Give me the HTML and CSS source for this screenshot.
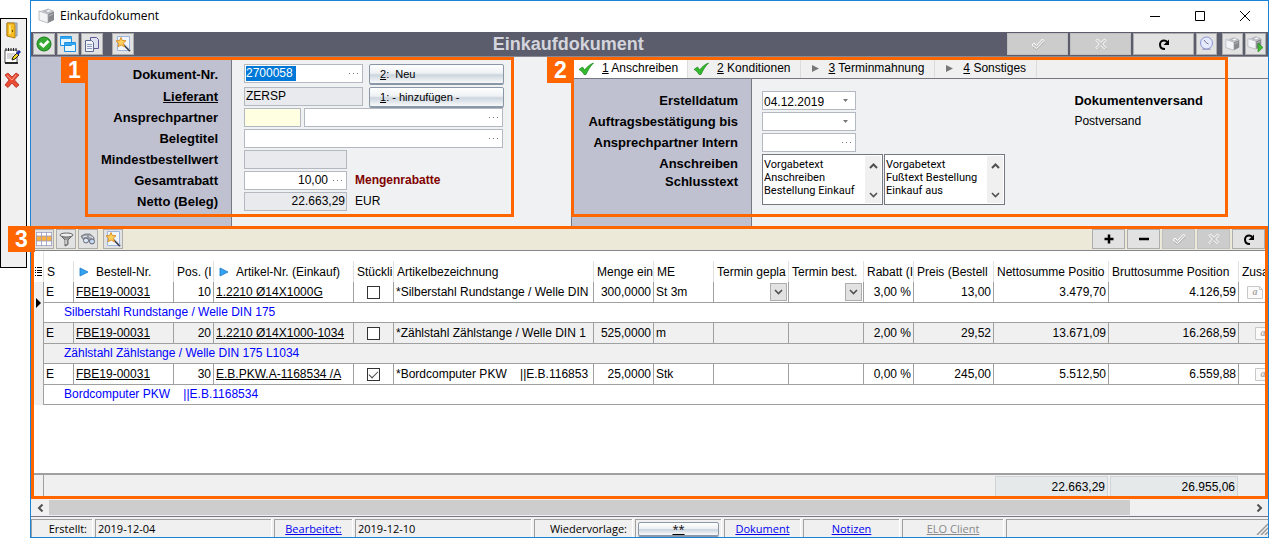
FILE: index.html
```html
<!DOCTYPE html>
<html lang="de">
<head>
<meta charset="utf-8">
<title>Einkaufdokument</title>
<link rel="stylesheet" href="styles.css">
</head>
<body>
<svg class="defs" aria-hidden="true">
  <symbol id="i-wand" viewBox="0 0 18 18">
    <path d="M3.500 1.500h12v14h-12z" fill="#f1f5fc" stroke="#9db4de"/>
    <path d="M10 10l6 6" stroke="#3b4152" stroke-width="1.800"/><path d="M10.500 9.500l5.500 5.500" stroke="#c6cddb" stroke-width=".7"/>
    <path d="M7 2.500l1.300 3 3.700.2-2.700 2.500 1.200 3.600-3.300-1.800-3.300 1.800.8-3.600L2 5.900l3.500-.4z" fill="#ffcf5e" stroke="#d98a1e" stroke-width=".9"/>
  </symbol>
  <symbol id="i-check" viewBox="0 0 15 14">
    <path d="M0 7.500l3.500-2.500 2.200 3C8 5 10.500 2.500 14.500 1c-3.500 3.500-5.500 7.500-7.500 11.500H5C4 10.500 2.500 8.800 0 7.500z" fill="#34b92e" stroke="#1c851a" stroke-width=".7"/>
  </symbol>
  <symbol id="i-ok" viewBox="0 0 14 12">
    <path d="M1 7l2-2 2.500 2.500L11.500 1 13 2.500 5.500 10.500z" fill="#c4c4c4" stroke="#fff"/><path d="M2 9l3.500 2.700L13.500 4" fill="none" stroke="#a4a4a4" stroke-width=".7"/>
  </symbol>
  <symbol id="i-no" viewBox="0 0 12 12">
    <path d="M1 2.500L2.500 1 6 4.300 9.500 1 11 2.500 7.700 6 11 9.500 9.500 11 6 7.700 2.500 11 1 9.500 4.300 6z" fill="#c4c4c4" stroke="#fff"/><path d="M11.500 10L10 11.500M2.500 11.700L6 8.500" stroke="#a4a4a4" stroke-width=".7"/>
  </symbol>
  <symbol id="i-reload" viewBox="0 0 12 12">
    <path d="M7 11C3.500 11 2 9 2 6.500S4 2.500 6 2.500c1.500 0 2.500.6 3 1.500" fill="none" stroke="#000" stroke-width="2"/><path d="M11 1.500V7H5.500z"/>
  </symbol>
  <symbol id="i-printer" viewBox="0 0 18 18">
    <path d="M1 4l9-2 6 2v9l-7 3-8-3z" fill="#d5d7db"/><path d="M10 7l6-2.500V13l-6 3z" fill="#85878c"/><path d="M1 4l9 3v9l-9-3z" fill="#f3f4f6" stroke="#a9abb0" stroke-width=".7"/><path d="M4 4l6-2.500L16 4l-6 2.500z" fill="#b6b9bf"/><path d="M8 4l3-1.300L13 4l-3 1z" fill="#f9fafc"/><path d="M11 9l4-2" stroke="#bbb"/>
  </symbol>
  <symbol id="i-tri" viewBox="0 0 10 10"><path d="M1 1l8 4-8 4z" fill="#35a3f1" stroke="#1878c8" stroke-width=".8"/></symbol>
  <symbol id="i-grey" viewBox="0 0 8 8"><path d="M0 0l8 4-8 4z" fill="#777"/></symbol>
  <symbol id="i-down" viewBox="0 0 9 6"><path d="M1 1l3.500 3.500L8 1" fill="none" stroke="#505050" stroke-width="1.600"/></symbol>
  <symbol id="i-up" viewBox="0 0 9 6"><path d="M1 5l3.500-3.500L8 5" fill="none" stroke="#505050" stroke-width="2"/></symbol>
  <symbol id="i-dots" viewBox="0 0 9 3"><path d="M0 1h1v1H0zM4 1h1v1H4zM8 1h1v1H8z" fill="#777"/></symbol>
  <symbol id="i-note" viewBox="0 0 16 13">
    <path d="M.5.500h12l3 3v9H.5z" fill="#fafafa" stroke="#c9c9c9"/><path d="M12.500.500v3h3" fill="none" stroke="#c9c9c9"/>
  </symbol>
</svg>

<nav class="strip" aria-label="Werkzeuge">
  <button aria-label="Verlassen"><svg width="16" height="17" viewBox="0 0 16 17"><path d="M3 1h10v13H3z" fill="#b9c6d6" stroke="#8a93a0"/><path d="M3 1h7l1 2v13l-8-2z" fill="#f6bd22" stroke="#b47f0c"/><path d="M5 3h2v9H5z" fill="#ffe27a"/><path d="M8.500 8v2" stroke="#704c00"/></svg></button>
  <button aria-label="Notiz"><svg width="17" height="17" viewBox="0 0 17 17"><path d="M1 3h12v13H1z" fill="#fff" stroke="#555"/><path d="M1 16h13" stroke="#000" stroke-width="1.500"/><path d="M2 1v3M4.500 1v3M7 1v3M9.500 1v3M12 1v3" stroke="#222"/><path d="M3 7h8M3 9h6M3 11h5" stroke="#aaa"/><path d="M8 13l1-3 4-4 2 2-4 4z" fill="#f4d419" stroke="#221"/><path d="M12 6l3-3 2 2-3 3z" fill="#1e2ea8"/></svg></button>
  <button aria-label="Löschen"><svg width="16" height="16" viewBox="0 0 16 16"><path d="M1 3l3-2 4 4 4-4 3 2-4.500 5 4.500 5-3 2.500L8 11l-4 4.500L1 13l4-5z" fill="#ea4b33" stroke="#b32a1c" stroke-width=".8"/><path d="M3 3.500L8 8l4-5" fill="none" stroke="#f9a08c"/></svg></button>
</nav>

<main class="window">
  <header class="titlebar">
    <svg width="18" height="18"><use href="#i-printer"/></svg>
    <span class="caption">Einkaufdokument</span>
    <button aria-label="Minimieren"><svg width="12" height="12" viewBox="0 0 12 12"><path d="M1 6.500h10" stroke="#000"/></svg></button>
    <button aria-label="Maximieren"><svg width="12" height="12" viewBox="0 0 12 12"><path d="M1.500 1.500h9v9h-9z" fill="none" stroke="#000"/></svg></button>
    <button aria-label="Schließen"><svg width="12" height="12" viewBox="0 0 12 12"><path d="M1 1l10 10M11 1L1 11" stroke="#000"/></svg></button>
  </header>

  <div class="toolbar">
    <div class="tools">
      <button class="tool" aria-label="Speichern"><svg width="16" height="16" viewBox="0 0 16 16"><circle cx="8" cy="8" r="7" fill="#35ab31" stroke="#18791a"/><path d="M3 8l2-2 2.300 2.300L11.500 4l2 2-6.200 6z" fill="#fff"/></svg></button>
      <button class="tool" aria-label="Fenster"><svg width="18" height="18" viewBox="0 0 18 18"><path d="M1.500 1.500h11v9h-11zM5.500 7.500h11v9h-11z" fill="#e6f6ff" stroke="#1c8fe0"/><path d="M1.500 3h11M5.500 9h11" stroke="#35a8f4" stroke-width="2"/></svg></button>
      <button class="tool" aria-label="Kopieren"><svg width="16" height="16" viewBox="0 0 16 16"><path d="M6.500 1.500h6l2 2v9h-8z" fill="#dfe2f0" stroke="#5d5794"/><path d="M1.500 4.500h6l2 2v9h-8z" fill="#f2f4fa" stroke="#5a6b92"/><path d="M3 8.500h5M3 10.500h5M3 12.500h5" stroke="#8a9bbd"/></svg></button>
      <button class="tool apart" aria-label="Assistent"><svg width="18" height="18"><use href="#i-wand"/></svg></button>
    </div>
    <h1>Einkaufdokument</h1>
    <div class="tools end">
      <button class="tool wide" disabled aria-label="Übernehmen"><svg width="14" height="12"><use href="#i-ok"/></svg></button>
      <button class="tool wide" disabled aria-label="Verwerfen"><svg width="12" height="12"><use href="#i-no"/></svg></button>
      <button class="tool wide" aria-label="Aktualisieren"><svg width="12" height="12"><use href="#i-reload"/></svg></button>
      <button class="tool" aria-label="Uhr"><svg width="16" height="16" viewBox="0 0 16 16"><path d="M4 12l-1 2h9l-1-2z" fill="#aab"/><circle cx="7.500" cy="7" r="6" fill="#e6eaff" stroke="#8b93d6"/><path d="M7.500 7l2 1M7.500 7L5 4" stroke="#778"/></svg></button>
      <button class="tool gap" aria-label="Drucken"><svg width="16" height="16"><use href="#i-printer"/></svg></button>
      <button class="tool" aria-label="Sofort drucken"><svg width="18" height="18" viewBox="0 0 18 18"><use href="#i-printer" width="16" height="16"/><path d="M11 8l5 4.500-5 4.500z" fill="#42ba36" stroke="#208018" stroke-width=".6"/></svg></button>
    </div>
  </div>

  <div class="panels">
    <section class="panel first">
      <div class="labels">
        <label for="nr">Dokument-Nr.</label>
        <label for="lief"><u>Lieferant</u></label>
        <label for="asp">Ansprechpartner</label>
        <label for="titel">Belegtitel</label>
        <label for="mind">Mindestbestellwert</label>
        <label for="rabatt">Gesamtrabatt</label>
        <label for="netto">Netto (Beleg)</label>
      </div>
      <div class="values">
        <div class="line"><span class="field mid"><input id="nr" class="marked" value="2700058"><svg class="dots"><use href="#i-dots"/></svg></span><button class="glossy"><u>2</u>:&nbsp; Neu</button></div>
        <div class="line"><span class="field mid ro"><input id="lief" value="ZERSP" readonly></span><button class="glossy"><u>1</u>: - hinzufügen -</button></div>
        <div class="line tight"><span class="field code"><input id="asp"></span><span class="field name"><input aria-label="Name Ansprechpartner"><svg class="dots"><use href="#i-dots"/></svg></span></div>
        <div class="line"><span class="field full"><input id="titel"><svg class="dots"><use href="#i-dots"/></svg></span></div>
        <div class="line"><span class="field num ro"><input id="mind" readonly></span></div>
        <div class="line"><span class="field num"><input id="rabatt" value="10,00"><svg class="dots"><use href="#i-dots"/></svg></span><strong>Mengenrabatte</strong></div>
        <div class="line"><span class="field num ro"><input id="netto" value="22.663,29" readonly></span><span>EUR</span></div>
      </div>
      <div class="frame one"><b>1</b></div>
    </section>

    <section class="panel second">
      <div class="tabs" role="tablist">
        <button role="tab" aria-selected="true"><svg width="15" height="14"><use href="#i-check"/></svg><span><u>1</u> Anschreiben</span></button>
        <button role="tab"><svg width="15" height="14"><use href="#i-check"/></svg><span><u>2</u> Konditionen</span></button>
        <button role="tab" class="grey"><svg width="7" height="7"><use href="#i-grey"/></svg><span><u>3</u> Terminmahnung</span></button>
        <button role="tab" class="grey"><svg width="7" height="7"><use href="#i-grey"/></svg><span><u>4</u> Sonstiges</span></button>
      </div>
      <div class="sheet">
        <div class="labels">
          <label for="datum">Erstelldatum</label>
          <label for="ab">Auftragsbestätigung bis</label>
          <label for="intern">Ansprechpartner Intern</label>
          <label for="ansch">Anschreiben</label>
          <label for="schluss">Schlusstext</label>
        </div>
        <div class="values">
          <div class="line"><span class="field date"><select id="datum"><option>04.12.2019</option></select><svg class="arrow" viewBox="0 0 5 3"><path d="M0 0h5L2.500 3z" fill="#777"/></svg></span></div>
          <div class="line"><span class="field date"><select id="ab"><option></option></select><svg class="arrow" viewBox="0 0 5 3"><path d="M0 0h5L2.500 3z" fill="#777"/></svg></span></div>
          <div class="line"><span class="field date"><input id="intern"><svg class="dots"><use href="#i-dots"/></svg></span></div>
          <div class="memos">
            <div class="memo"><textarea id="ansch">Vorgabetext
Anschreiben
Bestellung Einkauf</textarea><div class="scroll"><svg width="9" height="6"><use href="#i-up"/></svg><svg width="9" height="6"><use href="#i-down"/></svg></div></div>
            <div class="memo"><textarea id="schluss">Vorgabetext
Fußtext Bestellung
Einkauf aus</textarea><div class="scroll"><svg width="9" height="6"><use href="#i-up"/></svg><svg width="9" height="6"><use href="#i-down"/></svg></div></div>
          </div>
        </div>
        <div class="dispatch"><b>Dokumentenversand</b><span>Postversand</span></div>
      </div>
      <div class="frame two"><b>2</b></div>
    </section>
  </div>

  <section class="positions">
    <b class="tag">3</b>
    <div class="gridbar">
      <button class="tool" aria-label="Spalten"><svg width="16" height="16" viewBox="0 0 16 16"><path d="M0 1h16v14H0z" fill="#fff"/><path d="M0 5h16v5H0z" fill="#fbb040"/><path d="M0 1.500h16M0 5h16M0 10h16M0 14.500h16M5.500 1v14M10.500 1v14M.5 1v14M15.500 1v14" stroke="#99b" stroke-width=".8"/></svg></button>
      <button class="tool" aria-label="Filter"><svg width="15" height="15" viewBox="0 0 15 15"><path d="M1 3l5 5v6l3-1.500V8l5-5z" fill="#9a9a9a" stroke="#666"/><ellipse cx="7.500" cy="3" rx="6.500" ry="2" fill="#eee" stroke="#666"/><path d="M7 8v4" stroke="#fff"/></svg></button>
      <button class="tool" aria-label="Suchen"><svg width="16" height="14" viewBox="0 0 16 14"><path d="M1 4l4-2h5l4 3.500v4l-3 2-4-4-4 0z" fill="#959ca6" stroke="#656d76" stroke-width=".7"/><circle cx="6" cy="8.500" r="2.500" fill="#dbe9f7" stroke="#667"/><circle cx="12" cy="9.500" r="2.500" fill="#c4d9f2" stroke="#667"/><path d="M3 5l4-1M9 4l4 2" stroke="#eee"/></svg></button>
      <button class="tool gap" aria-label="Assistent"><svg width="18" height="18"><use href="#i-wand"/></svg></button>
      <span class="fill"></span>
      <button class="tool wide" aria-label="Hinzufügen"><svg width="10" height="10" viewBox="0 0 10 10"><path d="M5 .5v9M.5 5h9" stroke="#000" stroke-width="2.500"/></svg></button>
      <button class="tool wide" aria-label="Entfernen"><svg width="10" height="10" viewBox="0 0 10 10"><path d="M0 5h10" stroke="#000" stroke-width="2.500"/></svg></button>
      <button class="tool wide" disabled aria-label="Übernehmen"><svg width="14" height="12"><use href="#i-ok"/></svg></button>
      <button class="tool wide" disabled aria-label="Verwerfen"><svg width="12" height="12"><use href="#i-no"/></svg></button>
      <button class="tool wide" aria-label="Aktualisieren"><svg width="12" height="12"><use href="#i-reload"/></svg></button>
    </div>
    <div class="tablebox">
      <table>
        <colgroup><col class="w10"><col class="w30"><col class="w100"><col class="w40"><col class="w140"><col class="w40"><col class="w200"><col class="w60"><col class="w60"><col class="w75"><col class="w75"><col class="w50"><col class="w80"><col class="w115"><col class="w130"><col></colgroup>
        <thead>
          <tr><th><svg width="7" height="9" viewBox="0 0 7 9"><path d="M0 .5h1M2 .5h5M0 3.500h1M2 3.500h5M0 5.500h1M2 5.500h5M0 8.500h1M2 8.500h5" stroke="#000"/></svg></th><th>S</th><th class="play"><svg width="10" height="10"><use href="#i-tri"/></svg>Bestell-Nr.</th><th>Pos. (I</th><th class="play"><svg width="10" height="10"><use href="#i-tri"/></svg>Artikel-Nr. (Einkauf)</th><th>Stückli</th><th>Artikelbezeichnung</th><th>Menge ein</th><th>ME</th><th>Termin gepla</th><th>Termin best.</th><th>Rabatt (I</th><th>Preis (Bestell</th><th>Nettosumme Positio</th><th>Bruttosumme Position</th><th>Zusa</th></tr>
        </thead>
        <tbody>
          <tr><td rowspan="2" class="mark"><svg width="6" height="10" viewBox="0 0 6 10"><path d="M0 0l5 5-5 5z"/></svg></td><td>E</td><td><a href="#">FBE19-00031</a></td><td class="r">10</td><td><a href="#">1.2210 Ø14X1000G</a></td><td class="c"><input type="checkbox" aria-label="Stückliste 10"></td><td>*Silberstahl Rundstange / Welle DIN</td><td class="r">300,0000</td><td>St 3m</td><td class="pick"><span><select aria-label="Termin geplant"><option></option></select><svg width="9" height="6"><use href="#i-down"/></svg></span></td><td class="pick"><span><select aria-label="Termin bestätigt"><option></option></select><svg width="9" height="6"><use href="#i-down"/></svg></span></td><td class="r">3,00 %</td><td class="r">13,00</td><td class="r">3.479,70</td><td class="r">4.126,59</td><td class="note"><span><svg width="16" height="13"><use href="#i-note"/></svg><i>a</i></span></td></tr>
          <tr class="sub"><td colspan="15">Silberstahl Rundstange / Welle DIN 175</td></tr>
          <tr class="alt"><td rowspan="2" class="mark"></td><td>E</td><td><a href="#">FBE19-00031</a></td><td class="r">20</td><td><a href="#">1.2210 Ø14X1000-1034</a></td><td class="c"><input type="checkbox" aria-label="Stückliste 20"></td><td>*Zählstahl Zählstange / Welle DIN 1</td><td class="r">525,0000</td><td>m</td><td></td><td></td><td class="r">2,00 %</td><td class="r">29,52</td><td class="r">13.671,09</td><td class="r">16.268,59</td><td class="note far"><span><svg width="16" height="13"><use href="#i-note"/></svg><i>a</i></span></td></tr>
          <tr class="sub alt"><td colspan="15">Zählstahl Zählstange / Welle DIN 175 L1034</td></tr>
          <tr><td rowspan="2" class="mark"></td><td>E</td><td><a href="#">FBE19-00031</a></td><td class="r">30</td><td><a href="#">E.B.PKW.A-1168534 /A</a></td><td class="c"><input type="checkbox" checked aria-label="Stückliste 30"></td><td>*Bordcomputer PKW &nbsp;&nbsp; ||E.B.116853</td><td class="r">25,0000</td><td>Stk</td><td></td><td></td><td class="r">0,00 %</td><td class="r">245,00</td><td class="r">5.512,50</td><td class="r">6.559,88</td><td class="note far"><span><svg width="16" height="13"><use href="#i-note"/></svg><i>a</i></span></td></tr>
          <tr class="sub"><td colspan="15">Bordcomputer PKW &nbsp;&nbsp; ||E.B.1168534</td></tr>
        </tbody>
      </table>
    </div>
    <div class="totals"><span class="stub"></span><span class="lead"></span><output class="net">22.663,29</output><output class="gross">26.955,06</output></div>
  </section>

  <div class="hscroll">
    <button aria-label="Nach links"><svg width="7" height="8" viewBox="0 0 7 8"><path d="M5.500 .500L2 4l3.500 3.500" fill="none" stroke="#505050" stroke-width="2"/></svg></button>
    <div class="track"><div class="thumb"></div></div>
    <button aria-label="Nach rechts"><svg width="7" height="8" viewBox="0 0 7 8"><path d="M1.500 .500L5 4 1.500 7.500" fill="none" stroke="#505050" stroke-width="2"/></svg></button>
  </div>

  <footer class="status">
    <span class="s61 end">Erstellt:</span>
    <span class="s176">2019-12-04</span>
    <span class="s78 mid"><a href="#">Bearbeitet:</a></span>
    <span class="s176">2019-12-10</span>
    <span class="s98 end">Wiedervorlage:</span>
    <span class="s86 btn"><button class="glossy"><u>**</u></button></span>
    <span class="s76 mid"><a href="#">Dokument</a></span>
    <span class="s96 mid"><a href="#">Notizen</a></span>
    <span class="s101 mid"><a href="#" class="off">ELO Client</a></span>
    <span class="rest"><svg width="12" height="12" viewBox="0 0 12 12"><path d="M1 12L12 1M5 12l7-7M9 12l3-3" stroke="#999" stroke-width="1.500"/></svg></span>
  </footer>
</main>
</body>
</html>
```
FILE: styles.css
```css
* { box-sizing: border-box; }
body {
  margin: 0;
  display: flex;
  gap: 3px;
  min-height: 100vh;
  background: #fff;
  color: #000;
  font: 12px/15px "Liberation Sans", Arial, sans-serif;
}
button, input, select, textarea { font: inherit; color: inherit; margin: 0; }
button { display: flex; align-items: center; justify-content: center; padding: 0; border: 0; background: none; }
svg { display: block; flex: none; }
.defs { position: absolute; width: 0; height: 0; }

.strip {
  flex: none;
  display: flex;
  flex-direction: column;
  align-items: flex-start;
  gap: 8px;
  width: 27px;
  height: 250px;
  margin-top: 18px;
  padding: 3px;
  border: 1px solid #000;
  background: #f0f0f0;
}

.window {
  flex: 1;
  min-width: 0;
  display: flex;
  flex-direction: column;
  border: 1px solid #1883d7;
  background: #f0f0f0;
}
.titlebar { display: flex; align-items: center; height: 31px; padding: 0 1px 2px 7px; background: #fff; }
.caption { flex: 1; padding-left: 4px; font: 12px/16px "Open Sans", sans-serif; }
.titlebar button { width: 45px; height: 28px; }

.toolbar {
  display: flex;
  align-items: center;
  height: 25px;
  padding: 0 2px;
  background: #5b5c6c;
  border-bottom: 1px solid #888994;
}
.toolbar h1 { margin: 0; font-size: 18px; line-height: 22px; color: #d4d5dc; }
.tools { display: flex; gap: 2px; flex: 17 0 0; }
.tools.end { flex-grow: 23; justify-content: flex-end; }
.tool { width: 22px; height: 22px; background: #e2e2e2; border: 1px solid #adadad; }
.tool:disabled { background: #cccccc; border-color: #bfbfbf; }
.end .tool { width: 21px; }
.tools .tool.wide { width: 61px; }
.tools .apart { margin-left: 7px; }
.tool.gap { margin-left: 3px; }

.panels { display: flex; height: 169px; background: #eff1f3; }
.panel { position: relative; }
.first { width: 540px; flex: none; display: flex; }
.second { flex: 1; display: flex; flex-direction: column; }
.labels, .values { display: grid; align-content: start; gap: 2px; }
.labels {
  flex: none;
  background: #bfc0d0;
  border-right: 1px solid #77787f;
  font-weight: bold;
  font-size: 13px;
  text-align: right;
}
.labels label { align-self: center; }
.first .labels { width: 201px; padding: 7px 13px 0 0; grid-template-rows: 21px repeat(6, 19px); }
.first .values { padding: 7px 0 0 12px; grid-template-rows: 21px repeat(6, 19px); }
.line { display: flex; gap: 6px; align-items: flex-start; line-height: 19px; }
.line.tight { gap: 3px; }
.line strong { color: #800000; }
.line > strong, .line > .field + span { padding-left: 2px; }
.field { display: flex; align-items: center; height: 19px; background: #fff; border: 1px solid #b4b8c0; padding: 0 8px 0 1px; }
.field input, .field select { flex: 1; min-width: 0; width: 0; height: 15px; padding: 0; border: 0; background: none; outline: 0; appearance: none; }
.field.ro { background: #e9eaed; padding-right: 1px; }
.field input.marked { flex: none; width: 50px; background: #0078d7; color: #fff; }
.marked + .dots { margin-left: auto; }
.dots { width: 9px; height: 3px; }
.mid.field { width: 119px; padding-right: 4px; }
.field.code { width: 57px; background: #ffffe1; }
.name { width: 199px; padding-right: 4px; }
.full { width: 259px; padding-right: 4px; }
.num { width: 103px; padding-right: 4px; }
.num input { text-align: right; padding-right: 5px; }
.num.ro input { padding-right: 0; }
.glossy {
  width: 135px;
  height: 20px;
  justify-content: flex-start;
  padding-left: 10px;
  border: 1px solid #8a97a6;
  border-radius: 2px;
  background: linear-gradient(#fff, #eef1f4 45%, #ccd5de 55%, #f8fafb);
  box-shadow: 0 1px 0 #8a97a6;
  font-size: 11px;
}
.frame { position: absolute; border: 3px solid #ff6600; pointer-events: none; z-index: 2; }
.frame.one { inset: 0 57px 9px 54px; }
.frame.two { inset: 0 40px 9px 0; }
.frame b, .tag {
  position: absolute;
  top: -3px;
  left: -27px;
  z-index: 3;
  width: 27px;
  height: 26px;
  background: #ff6600;
  color: #fff;
  font: bold 23px/26px "Liberation Sans", Arial, sans-serif;
  text-align: center;
}

.tabs { display: flex; height: 22px; padding: 2px 0 0 2px; background: #f0f0f0; border-bottom: 1px solid #77787f; }
.tabs button { gap: 8px; padding: 0 9px 0 6px; border-right: 1px solid #dcdcdc; }
.tabs button[aria-selected="true"] { background: #fff; }
.tabs .grey { gap: 10px; padding: 0 10px 0 11px; }
.sheet { flex: 1; display: flex; border-left: 1px solid #77787f; }
.sheet .labels, .sheet .values { padding-top: 12px; grid-template-rows: repeat(4, 19px) 13px; }
.sheet .labels { width: 180px; padding-right: 13px; }
.sheet .values { padding-left: 10px; }
.date { width: 94px; }
.date.field { padding-right: 4px; }
.arrow { width: 5px; height: 3px; margin-right: 3px; }
.memos { grid-row: 4 / span 2; display: flex; gap: 1px; }
.memo { display: flex; width: 121px; height: 51px; padding: 1px; border: 1px solid #77787f; background: #fff; }
.memo textarea { width: 101px; padding: 2px 0 0 0; border: 0; outline: 0; resize: none; overflow: hidden; background: none; font: 11px/13px Roboto, sans-serif; white-space: pre; }
.scroll { width: 16px; display: flex; flex-direction: column; justify-content: space-between; align-items: center; padding: 7px 0 5px; background: #f0f0f0; }
.dispatch { display: grid; align-content: start; gap: 2px; margin: 12px 65px 0 auto; line-height: 19px; }
.dispatch b { font-size: 13px; }

.positions { position: relative; flex: 1; display: flex; flex-direction: column; border: 3px solid #ff6600; background: #fff; }
.tag { left: -26px; }
.gridbar { display: flex; gap: 2px; height: 22px; background: #ece9d8; border-bottom: 1px solid #85868c; }
.gridbar .tool { width: 20px; height: 20px; }
.gridbar .tool.wide { width: 33px; }
.fill { flex: 1; }
.tablebox { flex: 1; overflow: hidden; padding-top: 10px; background: linear-gradient(#e4e4e4, #e4e4e4) 9px 0 / 1px 31px no-repeat; }
table { width: 100%; table-layout: fixed; border-collapse: separate; border-spacing: 0; }
.w10 { width: 10px; } .w30 { width: 30px; } .w40 { width: 40px; } .w50 { width: 50px; }
.w60 { width: 60px; } .w75 { width: 75px; } .w80 { width: 80px; } .w100 { width: 100px; }
.w115 { width: 115px; } .w130 { width: 130px; } .w140 { width: 140px; } .w200 { width: 200px; }
th, td { padding: 0 2px; overflow: hidden; white-space: nowrap; border-right: 1px solid #a0a0a0; }
th { height: 21px; padding: 1px 0 0 3px; font-weight: normal; text-align: left; border-color: #e0e0e0; }
th:first-child { padding: 0 0 0 1px; }
td { height: 21px; border-bottom: 1px solid #a0a0a0; }
th:last-child, td:last-child { border-right: 0; }
td a { color: inherit; }
.play svg { display: inline-block; margin: 0 7px 0 2px; vertical-align: -1px; }
.r { text-align: right; }
.sub td { height: 20px; padding-left: 20px; color: #0000ff; }
.alt td { background: #f0f0f0; }
td.mark { padding: 0 0 0 2px; background: #f0f0f0; border-bottom: 0; }
.c input { appearance: none; display: block; width: 13px; height: 13px; margin: 0 auto; border: 1px solid #333; background: #fff; }
.c input:checked::after { content: ""; display: block; width: 8px; height: 4px; margin: 2px 0 0 1px; border: solid #444; border-width: 0 0 1px 1px; transform: rotate(-45deg); }
.pick { padding: 0 1px; }
.pick span { display: grid; place-items: center; width: 17px; height: 18px; margin-left: auto; background: #e2e2e2; border: 1px solid #adadad; }
.pick select, .pick svg { grid-area: 1 / 1; }
.pick select { width: 15px; height: 16px; appearance: none; border: 0; background: none; }
.note { padding-left: 8px; }
.note.far { padding-left: 16px; }
.note span { display: grid; place-items: center; width: 16px; height: 13px; }
.note svg, .note i { grid-area: 1 / 1; }
.note i { font: italic bold 10px/12px "Liberation Serif", serif; color: #aaa; }
.totals { display: flex; height: 23px; border-top: 2px solid #a0a0a0; background: #f0f0f0; }
.stub { width: 10px; border-right: 1px solid #a0a0a0; }
.lead { flex: 1; }
.totals output { margin-top: 1px; padding-right: 2px; border: 1px solid #d0d4d6; border-bottom: 0; background: #e5e9ea; line-height: 20px; text-align: right; }
.net { width: 113px; margin-right: 2px; }
.gross { width: 128px; margin-right: 27px; }

.hscroll { display: flex; height: 18px; padding-top: 1px; border-bottom: 1px solid #77788a; }
.hscroll button { width: 18px; }
.track { flex: 1; }
.thumb { width: 90%; height: 15px; background: #cdcdcd; }
.status { display: flex; gap: 3px; height: 20px; padding-top: 2px; font: 11px/16px "Open Sans", sans-serif; }
.status > span { flex: none; display: flex; align-items: center; padding: 0 2px; border: solid #a0a0a0; border-width: 1px 0 0 1px; box-shadow: 1px 0 0 #fff; }
.status .end { justify-content: flex-end; padding-right: 5px; }
.status .mid { justify-content: center; }
.status a { color: #0000ee; }
.status .off { color: #8a8a8a; }
.status .glossy { width: 100%; height: 14px; padding: 0; justify-content: center; }
.s61 { width: 61px; } .s176 { width: 176px; } .s78 { width: 78px; } .s98 { width: 98px; }
.s86 { width: 86px; } .s76 { width: 76px; } .s96 { width: 96px; } .s101 { width: 101px; }
.status > .rest { flex: 1; min-width: 0; justify-content: flex-end; padding: 0; box-shadow: none; }
```
